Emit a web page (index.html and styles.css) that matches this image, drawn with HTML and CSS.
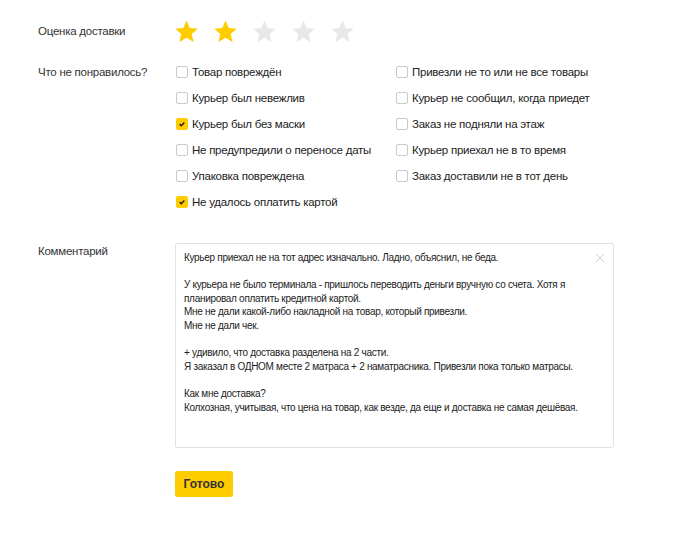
FILE: index.html
```html
<!DOCTYPE html>
<html lang="ru">
<head>
<meta charset="utf-8">
<link rel="stylesheet" href="styles.css">
</head>
<body>
<div class="form">
  <div class="row rating-row">
    <div class="label">Оценка доставки</div>
    <div class="stars">
      <svg class="star on" viewBox="0 0 24 24"><path d="M12 1.5l3.1 7.1 7.7.7-5.8 5.1 1.8 7.6L12 18l-6.8 4 1.8-7.6-5.8-5.1 7.7-.7z"/></svg>
      <svg class="star on" viewBox="0 0 24 24"><path d="M12 1.5l3.1 7.1 7.7.7-5.8 5.1 1.8 7.6L12 18l-6.8 4 1.8-7.6-5.8-5.1 7.7-.7z"/></svg>
      <svg class="star" viewBox="0 0 24 24"><path d="M12 1.5l3.1 7.1 7.7.7-5.8 5.1 1.8 7.6L12 18l-6.8 4 1.8-7.6-5.8-5.1 7.7-.7z"/></svg>
      <svg class="star" viewBox="0 0 24 24"><path d="M12 1.5l3.1 7.1 7.7.7-5.8 5.1 1.8 7.6L12 18l-6.8 4 1.8-7.6-5.8-5.1 7.7-.7z"/></svg>
      <svg class="star" viewBox="0 0 24 24"><path d="M12 1.5l3.1 7.1 7.7.7-5.8 5.1 1.8 7.6L12 18l-6.8 4 1.8-7.6-5.8-5.1 7.7-.7z"/></svg>
    </div>
  </div>

  <div class="row issues-row">
    <div class="label">Что не понравилось?</div>
    <div class="checks">
      <div class="col">
        <label class="check"><span class="box"></span>Товар повреждён</label>
        <label class="check"><span class="box"></span>Курьер был невежлив</label>
        <label class="check"><span class="box checked"><svg viewBox="0 0 12 12"><path d="M3.2 6.1l2 1.9 3.6-3.8"/></svg></span>Курьер был без маски</label>
        <label class="check"><span class="box"></span>Не предупредили о переносе даты</label>
        <label class="check"><span class="box"></span>Упаковка повреждена</label>
        <label class="check"><span class="box checked"><svg viewBox="0 0 12 12"><path d="M3.2 6.1l2 1.9 3.6-3.8"/></svg></span>Не удалось оплатить картой</label>
      </div>
      <div class="col">
        <label class="check"><span class="box"></span>Привезли не то или не все товары</label>
        <label class="check"><span class="box"></span>Курьер не сообщил, когда приедет</label>
        <label class="check"><span class="box"></span>Заказ не подняли на этаж</label>
        <label class="check"><span class="box"></span>Курьер приехал не в то время</label>
        <label class="check"><span class="box"></span>Заказ доставили не в тот день</label>
      </div>
    </div>
  </div>

  <div class="row comment-row">
    <div class="label comment-label">Комментарий</div>
    <div class="textarea">
      <div class="text">Курьер приехал не на тот адрес изначально. Ладно, объяснил, не беда.

У курьера не было терминала - пришлось переводить деньги вручную со счета. Хотя я
планировал оплатить кредитной картой.
Мне не дали какой-либо накладной на товар, который привезли.
Мне не дали чек.

+ удивило, что доставка разделена на 2 части.
Я заказал в ОДНОМ месте 2 матраса + 2 наматрасника. Привезли пока только матрасы.

Как мне доставка?
Колхозная, учитывая, что цена на товар, как везде, да еще и доставка не самая дешёвая.</div>
      <svg class="clear" viewBox="0 0 10 10"><path d="M1 1l8 8M9 1l-8 8"/></svg>
    </div>
  </div>

  <div class="row submit-row">
    <div></div>
    <div><button class="btn">Готово</button></div>
  </div>
</div>
</body>
</html>
```

FILE: styles.css
```css
* { box-sizing: border-box; }
html, body { margin: 0; padding: 0; background: #fff; }
body {
  font-family: "Liberation Sans", Arial, sans-serif;
  font-size: 11.5px;
  letter-spacing: -0.25px;
  color: #222;
}
.form {
  padding: 17px 0 0 38px;
}
.row {
  display: grid;
  grid-template-columns: 137px 1fr;
}
.label {
  color: #333;
  line-height: 16px;
}
.rating-row { align-items: center; height: 28px; }
.stars { display: flex; gap: 14px; margin-left: -1px; }
.star { width: 25px; height: 25px; fill: #e8e8e8; }
.star.on { fill: #ffcc00; }

.issues-row { margin-top: 19px; }
.checks { display: grid; grid-template-columns: 220px 1fr; margin-left: 1px; }
.col { display: flex; flex-direction: column; gap: 10px; }
.check {
  display: flex;
  align-items: center;
  height: 16px;
  line-height: 16px;
  color: #222;
  white-space: nowrap;
}
.box {
  width: 12px;
  height: 12px;
  border: 1px solid #c9c9c9;
  border-radius: 2px;
  margin-right: 4px;
  flex: none;
  display: flex;
  align-items: center;
  justify-content: center;
}
.box.checked { background: #ffcc00; border-color: #ffcc00; }
.box svg { width: 12px; height: 12px; fill: none; stroke: #222; stroke-width: 1.8; }

.comment-row { margin-top: 33px; }
.textarea {
  position: relative;
  width: 439px;
  height: 205px;
  border: 1px solid #e2e2e2;
  border-radius: 2px;
  padding: 7px 20px 0 8px;
}
.text {
  white-space: pre;
  font-size: 10px;
  letter-spacing: -0.3px;
  line-height: 13.6px;
  color: #222;
}
.clear {
  position: absolute;
  top: 9px;
  right: 8px;
  width: 10px;
  height: 10px;
  stroke: #ccc;
  stroke-width: 1;
}
.submit-row { margin-top: 23px; }
.btn {
  display: block;
  font-family: inherit;
  font-size: 12px;
  letter-spacing: 0;
  font-weight: bold;
  color: #333;
  background: #ffcc00;
  border: none;
  border-radius: 3px;
  width: 58px;
  height: 26px;
  padding: 0;
}
```
